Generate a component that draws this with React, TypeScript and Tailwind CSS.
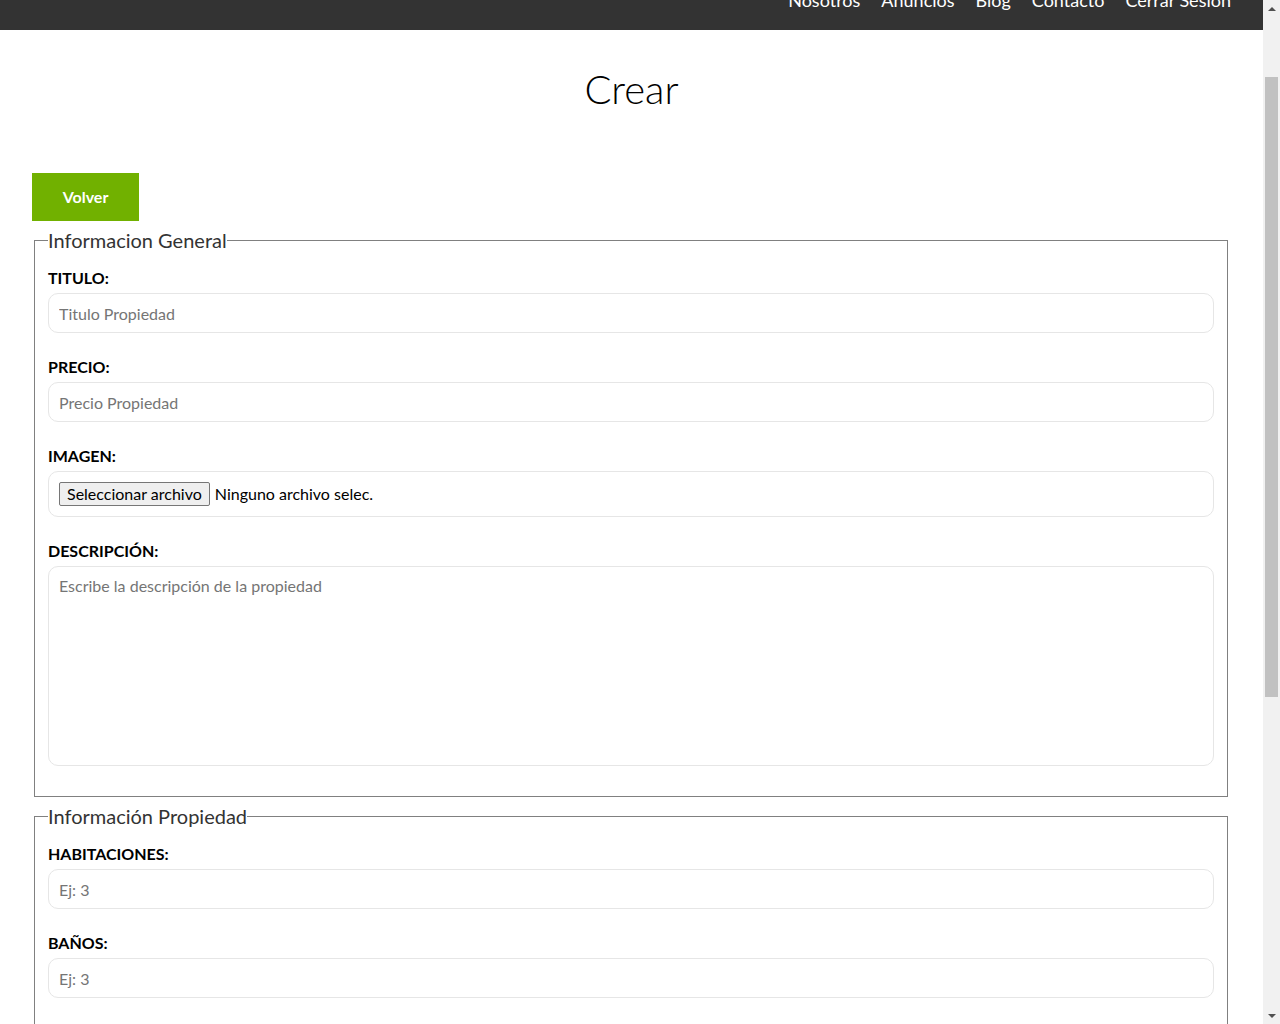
import React from 'react';

const font = { fontFamily: 'Lato, "Open Sans", sans-serif' };

function Field({ label, placeholder }: { label: string; placeholder: string }) {
  return (
    <div className="mb-[24px]">
      <label className="block text-[16px] font-bold text-black leading-[19px] mb-[6px]">{label}</label>
      <input
        className="block w-full h-[40px] rounded-[10px] border border-[#e6e6e6] px-[10px] text-[16px] text-[#333] placeholder:text-[#757575] outline-none"
        placeholder={placeholder}
      />
    </div>
  );
}

export default function App() {
  const links = ['Nosotros', 'Anuncios', 'Blog', 'Contacto', 'Cerrar Sesión'];
  return (
    <div className="flex h-[1024px] overflow-hidden bg-white" style={font}>
      <div className="w-[1263px] shrink-0 overflow-hidden">
        {/* header (scrolled up) */}
        <div className="h-[30px] bg-[#333333] overflow-hidden">
          <nav className="flex justify-end gap-[21px] pr-[32px] -mt-[11px] text-[18px] leading-[22px] text-white">
            {links.map(l => <a key={l}>{l}</a>)}
          </nav>
        </div>

        <h1 className="text-center text-[40px] font-light text-black leading-none mt-[39px]">Crear</h1>

        <div className="px-[32px] mt-[64px]">
          <a className="inline-flex items-center justify-center w-[107px] h-[48px] bg-[#71b100] text-white font-bold text-[16px]">Volver</a>

          <fieldset className="mt-[7px] ml-[2px] mr-[3px] border border-[#808080] pl-[13px] pr-[13px] pb-[4px]">
            <legend className="text-[20px] text-[#333] leading-[24px] px-0">Informacion General</legend>
            <div className="pt-[16px]">
              <Field label="TITULO:" placeholder="Titulo Propiedad" />
              <Field label="PRECIO:" placeholder="Precio Propiedad" />
              <div className="mb-[24px]">
                <label className="block text-[16px] font-bold text-black leading-[19px] mb-[6px]">IMAGEN:</label>
                <div className="flex items-center h-[46px] rounded-[10px] border border-[#e6e6e6] px-[10px] text-[16px] text-black">
                  <span className="inline-flex items-center h-[24px] px-[7px] bg-[#efefef] border border-[#767676] rounded-[2px] text-[16px] mr-[5px]">Seleccionar archivo</span>
                  <span>Ninguno archivo selec.</span>
                </div>
              </div>
              <div className="mb-[26px]">
                <label className="block text-[16px] font-bold text-black leading-[19px] mb-[6px]">DESCRIPCIÓN:</label>
                <textarea
                  className="block w-full h-[200px] rounded-[10px] border border-[#e6e6e6] px-[10px] py-[7px] text-[16px] resize-none placeholder:text-[#757575] outline-none"
                  placeholder="Escribe la descripción de la propiedad"
                />
              </div>
            </div>
          </fieldset>

          <fieldset className="mt-[7px] ml-[2px] mr-[3px] border border-[#808080] pl-[13px] pr-[13px] pb-[4px]">
            <legend className="text-[20px] text-[#333] leading-[24px] px-0">Información Propiedad</legend>
            <div className="pt-[16px]">
              <Field label="HABITACIONES:" placeholder="Ej: 3" />
              <Field label="BAÑOS:" placeholder="Ej: 3" />
              <Field label="ESTACIONAMIENTO:" placeholder="Ej: 3" />
            </div>
          </fieldset>
        </div>
      </div>

      {/* scrollbar */}
      <div className="w-[17px] shrink-0 bg-[#f1f1f1] flex flex-col items-center">
        <div className="h-[17px] flex items-center justify-center">
          <div className="w-0 h-0 border-l-[4px] border-r-[4px] border-b-[4px] border-l-transparent border-r-transparent border-b-[#505050]" />
        </div>
        <div className="w-[13px] h-[620px] bg-[#c1c1c1] mt-[60px]" />
        <div className="flex-1" />
        <div className="h-[17px] flex items-center justify-center">
          <div className="w-0 h-0 border-l-[4px] border-r-[4px] border-t-[4px] border-l-transparent border-r-transparent border-t-[#505050]" />
        </div>
      </div>
    </div>
  );
}
